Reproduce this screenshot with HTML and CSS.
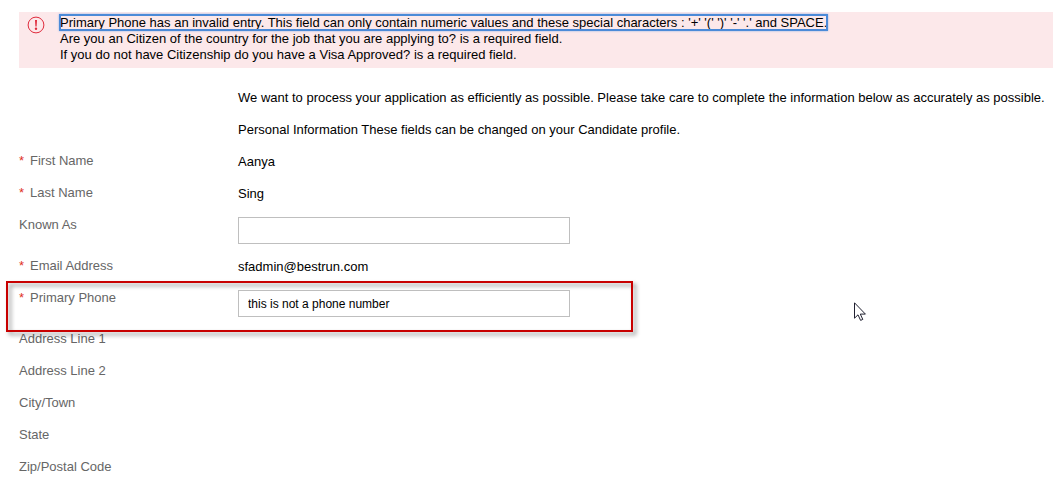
FILE: index.html
```html
<!DOCTYPE html>
<html lang="en">
<head>
<meta charset="utf-8">
<meta name="viewport" content="width=device-width, initial-scale=1">
<title>Personal Information</title>
<link rel="stylesheet" href="styles.css">
</head>
<body>
<main class="page">
  <section class="alert" role="alert">
    <svg class="alert-icon" viewBox="0 0 18 18" aria-hidden="true">
      <circle cx="9" cy="9" r="7.9" fill="none" stroke="#e02a3c" stroke-width="1"/>
      <path d="M8 4h2l-.4 6.5H8.4z" fill="#e02a3c"/>
      <circle cx="9" cy="12.8" r="1.2" fill="#e02a3c"/>
    </svg>
    <ul class="alert-list">
      <li><a class="alert-link focused" href="#phone">Primary Phone has an invalid entry. This field can only contain numeric values and these special characters : '+' '(' ')' '-' '.' and SPACE.</a></li>
      <li><a class="alert-link" href="#form">Are you an Citizen of the country for the job that you are applying to? is a required field.</a></li>
      <li><a class="alert-link" href="#form">If you do not have Citizenship do you have a Visa Approved? is a required field.</a></li>
    </ul>
  </section>

  <form class="form" id="form">
    <div class="intro">
      <p>We want to process your application as efficiently as possible. Please take care to complete the information below as accurately as possible.</p>
      <p>Personal Information These fields can be changed on your Candidate profile.</p>
    </div>
    <div class="row"><span class="label"><span class="required">*</span>First Name</span><span class="value">Aanya</span></div>
    <div class="row"><span class="label"><span class="required">*</span>Last Name</span><span class="value">Sing</span></div>
    <div class="row row-input"><label class="label" for="known">Known As</label><input class="field" id="known" type="text"></div>
    <div class="row"><span class="label"><span class="required">*</span>Email Address</span><span class="value">sfadmin@bestrun.com</span></div>
    <div class="row row-input marked"><label class="label" for="phone"><span class="required">*</span>Primary Phone</label><input class="field" id="phone" type="text" value="this is not a phone number"></div>
    <div class="row"><span class="label">Address Line 1</span></div>
    <div class="row"><span class="label">Address Line 2</span></div>
    <div class="row"><span class="label">City/Town</span></div>
    <div class="row"><span class="label">State</span></div>
    <div class="row"><span class="label">Zip/Postal Code</span></div>
  </form>
  <svg class="pointer" viewBox="0 0 13 20" aria-hidden="true">
    <path d="M.5.8v15.4l3.5-3.4 2.6 5.6 2.2-1-2.5-5.3h5.1z" fill="#fff" stroke="#202030" stroke-width="1"/>
  </svg>
</main>
</body>
</html>
```

FILE: styles.css
```css
*,
*::after {
  box-sizing: border-box;
}

body {
  margin: 0;
  background: #fff;
  color: #000;
  font: 13px/16px "Liberation Sans", Arial, sans-serif;
}

.page {
  position: relative;
  padding: 12px 0 0 19px;
}

.alert {
  display: flex;
  gap: 14px;
  padding: 3px 8px 5px 8px;
  background: #fce8ea;
}

.alert-icon {
  flex: none;
  width: 18px;
  height: 18px;
  margin-top: 1px;
}

.alert-list {
  margin: 0;
  padding: 0 0 0 1px;
  list-style: none;
}

.alert-link {
  color: inherit;
  text-decoration: none;
}

.focused {
  outline: 2px solid #4b8ad8;
  outline-offset: -1px;
  box-shadow: 0 0 2px 1px #8fb4e6;
}

.form {
  padding-top: 22px;
}

.intro {
  padding-bottom: 7px;
  padding-left: 219px;
}

.intro p {
  margin: 0 0 16px;
}

.intro p:last-child {
  margin-bottom: 0;
}

.row {
  display: grid;
  grid-template-columns: 219px 1fr;
  position: relative;
  min-height: 32px;
  padding: 8px 0 7px;
}

.row-input {
  padding-bottom: 6px;
}

.row:last-child {
  min-height: 0;
  padding-bottom: 0;
}

.label {
  color: #666;
}

.value {
  padding-top: 1px;
}

.required {
  display: inline-block;
  width: 11px;
  color: #e0301e;
}

.field {
  width: 332px;
  max-width: 100%;
  height: 27px;
  padding: 0 9px;
  border: 1px solid #bfbfbf;
  border-radius: 0;
  background: #fff;
  color: #000;
  font: 12px/16px "Liberation Sans", Arial, sans-serif;
}

.marked::after {
  content: "";
  position: absolute;
  z-index: 1;
  top: -1px;
  left: -13px;
  width: 627px;
  height: 51px;
  border: 2px solid #c80000;
  filter: drop-shadow(3px 3px 2px rgba(0, 0, 0, 0.45));
  pointer-events: none;
}

.pointer {
  position: absolute;
  top: 302px;
  left: 854px;
  width: 13px;
  height: 20px;
}
```
